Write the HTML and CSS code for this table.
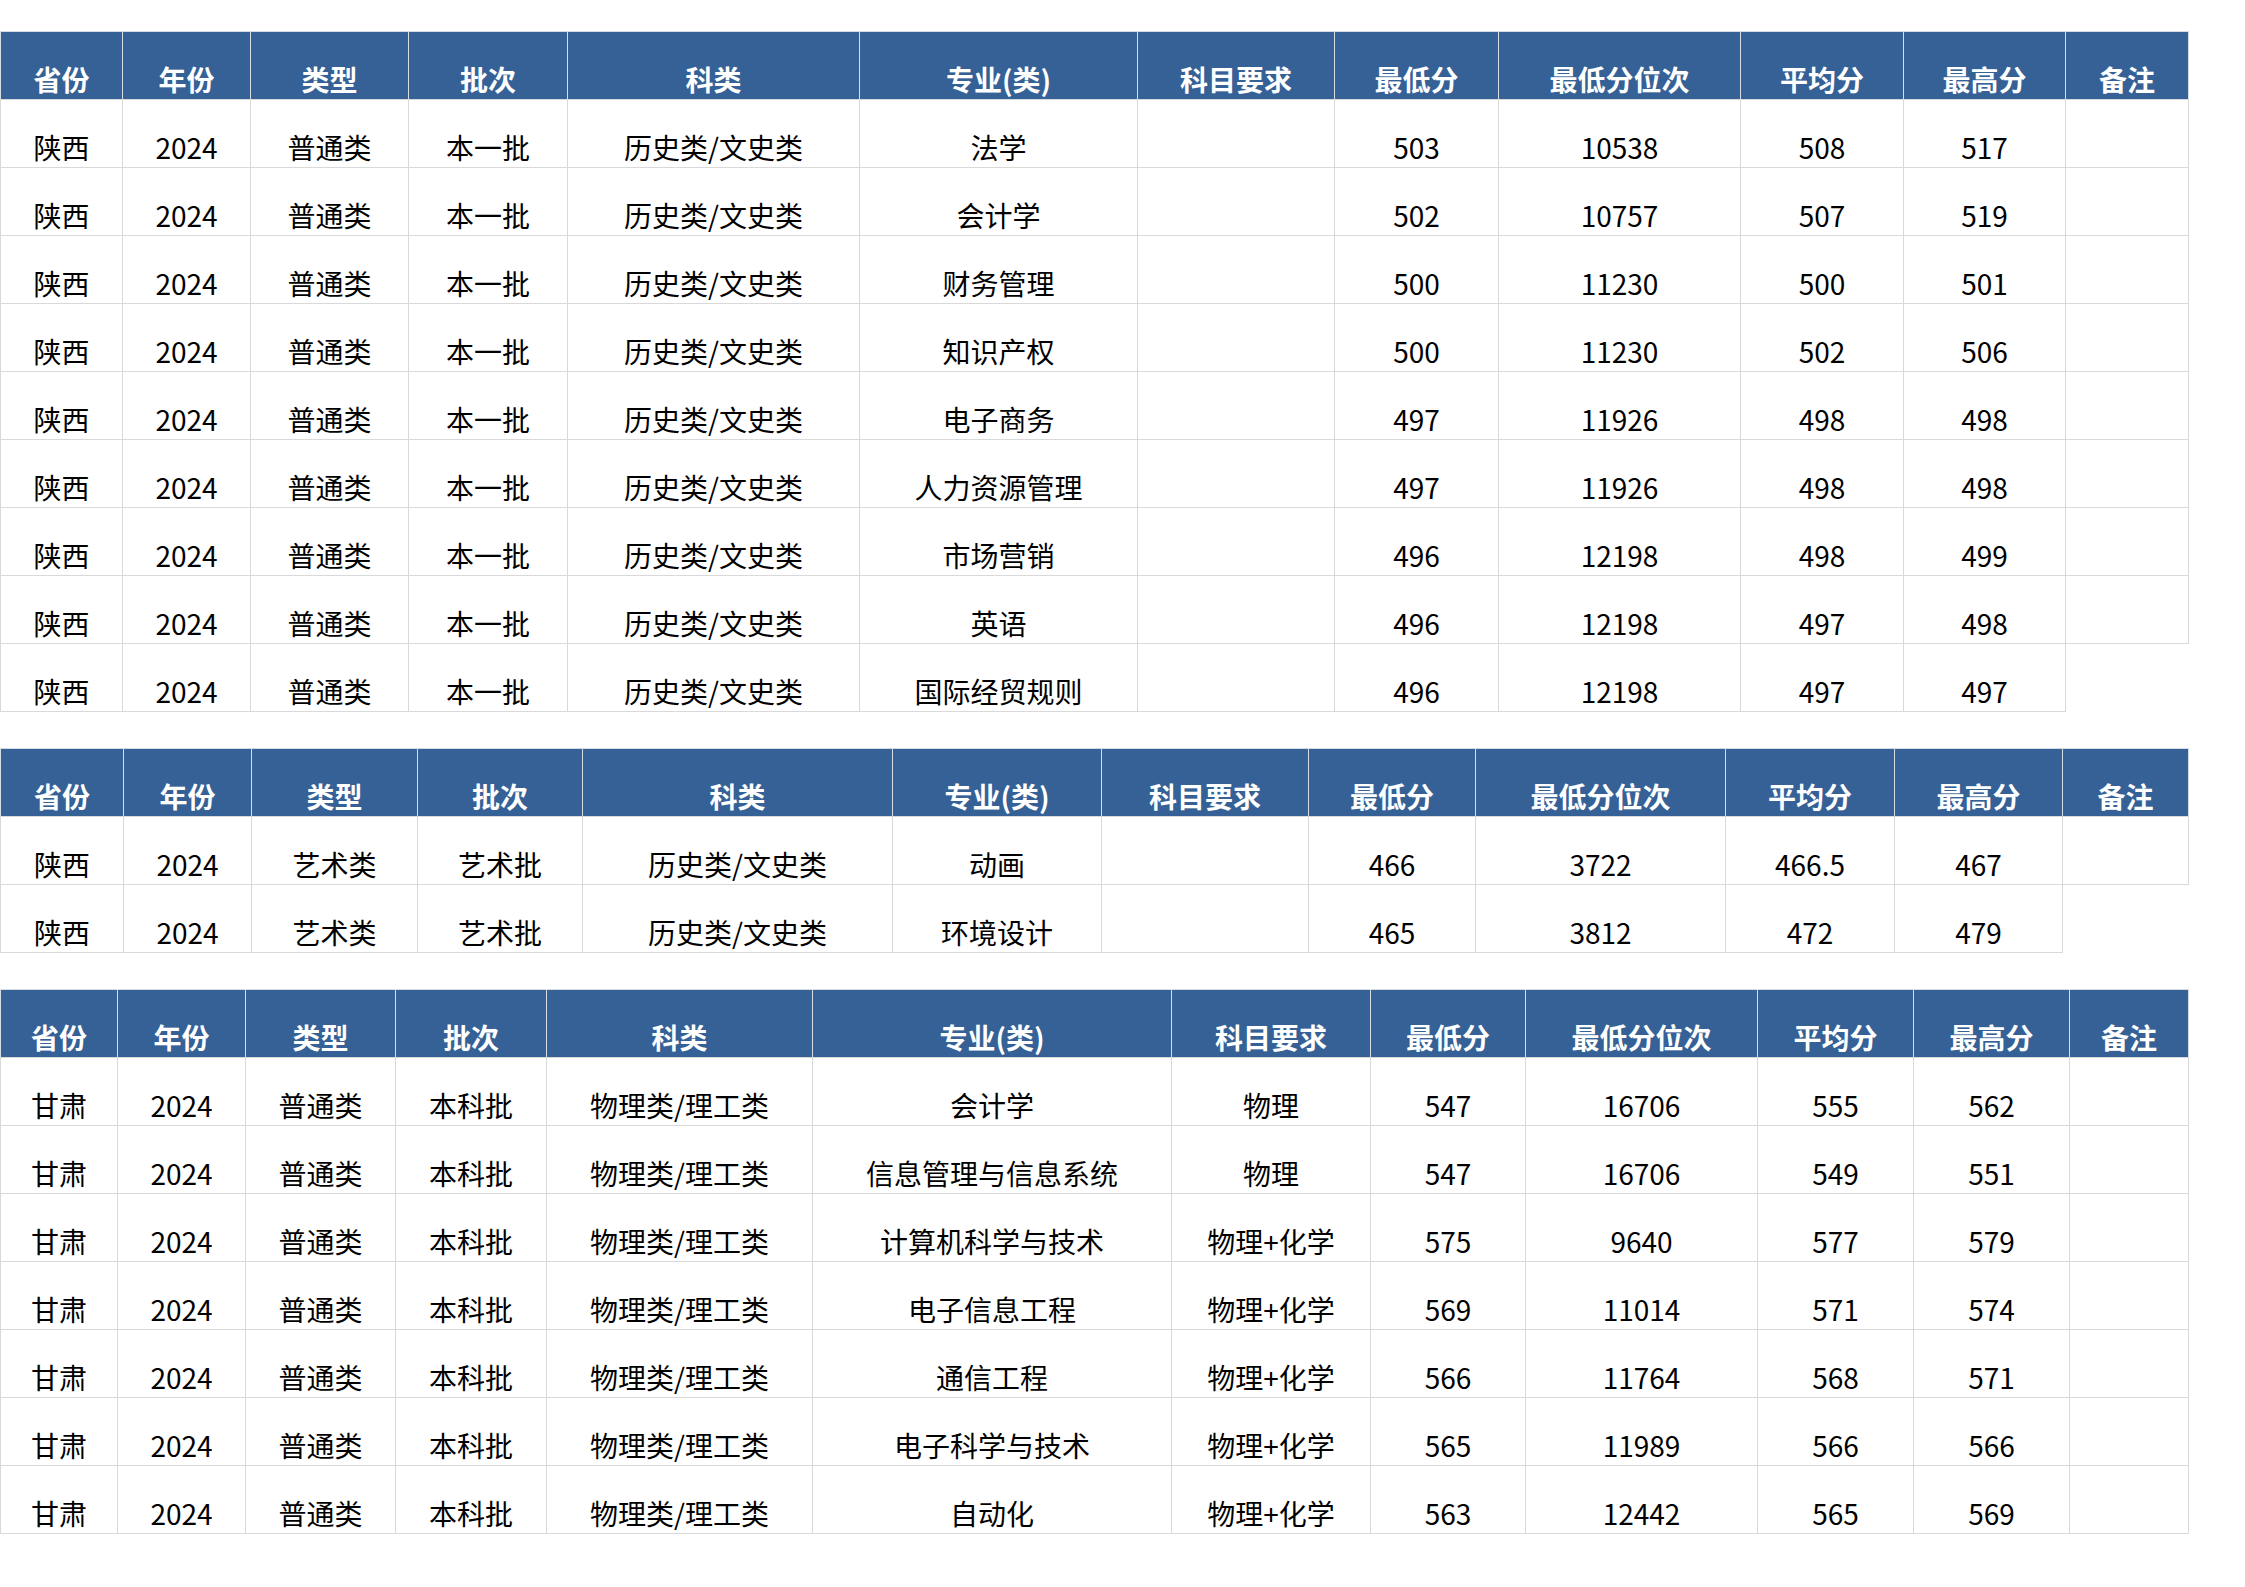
FILE: index.html
```html
<!DOCTYPE html>
<html lang="zh-CN">
<head>
<meta charset="utf-8">
<title>录取分数</title>
<link rel="stylesheet" href="styles.css">
</head>
<body>
<div class="page">
  <table class="grid t1">
    <colgroup><col><col><col><col><col><col><col><col><col><col><col><col></colgroup>
    <thead>
      <tr><th>省份</th><th>年份</th><th>类型</th><th>批次</th><th>科类</th><th>专业(类)</th><th>科目要求</th><th>最低分</th><th>最低分位次</th><th>平均分</th><th>最高分</th><th>备注</th></tr>
    </thead>
    <tbody>
      <tr><td>陕西</td><td>2024</td><td>普通类</td><td>本一批</td><td>历史类/文史类</td><td>法学</td><td></td><td>503</td><td>10538</td><td>508</td><td>517</td><td></td></tr>
      <tr><td>陕西</td><td>2024</td><td>普通类</td><td>本一批</td><td>历史类/文史类</td><td>会计学</td><td></td><td>502</td><td>10757</td><td>507</td><td>519</td><td></td></tr>
      <tr><td>陕西</td><td>2024</td><td>普通类</td><td>本一批</td><td>历史类/文史类</td><td>财务管理</td><td></td><td>500</td><td>11230</td><td>500</td><td>501</td><td></td></tr>
      <tr><td>陕西</td><td>2024</td><td>普通类</td><td>本一批</td><td>历史类/文史类</td><td>知识产权</td><td></td><td>500</td><td>11230</td><td>502</td><td>506</td><td></td></tr>
      <tr><td>陕西</td><td>2024</td><td>普通类</td><td>本一批</td><td>历史类/文史类</td><td>电子商务</td><td></td><td>497</td><td>11926</td><td>498</td><td>498</td><td></td></tr>
      <tr><td>陕西</td><td>2024</td><td>普通类</td><td>本一批</td><td>历史类/文史类</td><td>人力资源管理</td><td></td><td>497</td><td>11926</td><td>498</td><td>498</td><td></td></tr>
      <tr><td>陕西</td><td>2024</td><td>普通类</td><td>本一批</td><td>历史类/文史类</td><td>市场营销</td><td></td><td>496</td><td>12198</td><td>498</td><td>499</td><td></td></tr>
      <tr><td>陕西</td><td>2024</td><td>普通类</td><td>本一批</td><td>历史类/文史类</td><td>英语</td><td></td><td>496</td><td>12198</td><td>497</td><td>498</td><td></td></tr>
      <tr><td>陕西</td><td>2024</td><td>普通类</td><td>本一批</td><td>历史类/文史类</td><td>国际经贸规则</td><td></td><td>496</td><td>12198</td><td>497</td><td>497</td><td class="nb"></td></tr>
    </tbody>
  </table>

  <table class="grid t2">
    <colgroup><col><col><col><col><col><col><col><col><col><col><col><col></colgroup>
    <thead>
      <tr><th>省份</th><th>年份</th><th>类型</th><th>批次</th><th>科类</th><th>专业(类)</th><th>科目要求</th><th>最低分</th><th>最低分位次</th><th>平均分</th><th>最高分</th><th>备注</th></tr>
    </thead>
    <tbody>
      <tr><td>陕西</td><td>2024</td><td>艺术类</td><td>艺术批</td><td>历史类/文史类</td><td>动画</td><td></td><td>466</td><td>3722</td><td>466.5</td><td>467</td><td></td></tr>
      <tr><td>陕西</td><td>2024</td><td>艺术类</td><td>艺术批</td><td>历史类/文史类</td><td>环境设计</td><td></td><td>465</td><td>3812</td><td>472</td><td>479</td><td class="nb"></td></tr>
    </tbody>
  </table>

  <table class="grid t3">
    <colgroup><col><col><col><col><col><col><col><col><col><col><col><col></colgroup>
    <thead>
      <tr><th>省份</th><th>年份</th><th>类型</th><th>批次</th><th>科类</th><th>专业(类)</th><th>科目要求</th><th>最低分</th><th>最低分位次</th><th>平均分</th><th>最高分</th><th>备注</th></tr>
    </thead>
    <tbody>
      <tr><td>甘肃</td><td>2024</td><td>普通类</td><td>本科批</td><td>物理类/理工类</td><td>会计学</td><td>物理</td><td>547</td><td>16706</td><td>555</td><td>562</td><td></td></tr>
      <tr><td>甘肃</td><td>2024</td><td>普通类</td><td>本科批</td><td>物理类/理工类</td><td>信息管理与信息系统</td><td>物理</td><td>547</td><td>16706</td><td>549</td><td>551</td><td></td></tr>
      <tr><td>甘肃</td><td>2024</td><td>普通类</td><td>本科批</td><td>物理类/理工类</td><td>计算机科学与技术</td><td>物理+化学</td><td>575</td><td>9640</td><td>577</td><td>579</td><td></td></tr>
      <tr><td>甘肃</td><td>2024</td><td>普通类</td><td>本科批</td><td>物理类/理工类</td><td>电子信息工程</td><td>物理+化学</td><td>569</td><td>11014</td><td>571</td><td>574</td><td></td></tr>
      <tr><td>甘肃</td><td>2024</td><td>普通类</td><td>本科批</td><td>物理类/理工类</td><td>通信工程</td><td>物理+化学</td><td>566</td><td>11764</td><td>568</td><td>571</td><td></td></tr>
      <tr><td>甘肃</td><td>2024</td><td>普通类</td><td>本科批</td><td>物理类/理工类</td><td>电子科学与技术</td><td>物理+化学</td><td>565</td><td>11989</td><td>566</td><td>566</td><td></td></tr>
      <tr><td>甘肃</td><td>2024</td><td>普通类</td><td>本科批</td><td>物理类/理工类</td><td>自动化</td><td>物理+化学</td><td>563</td><td>12442</td><td>565</td><td>569</td><td></td></tr>
    </tbody>
  </table>
</div>
</body>
</html>
```

FILE: styles.css
```css
html, body {
  margin: 0;
  padding: 0;
  background: #ffffff;
}

body {
  font-family: "Noto Sans CJK SC", "Noto Sans", "Liberation Sans", sans-serif;
  color: #000000;
}

.page {
  display: flex;
  flex-direction: column;
  gap: 36px;
  padding-top: 31px;
}

.grid {
  border-collapse: collapse;
  table-layout: fixed;
  width: 2188px;
}

.grid th,
.grid td {
  height: 68px;
  box-sizing: border-box;
  padding: 0 2px 4px;
  border: 1px solid #d9d9d9;
  text-align: center;
  vertical-align: bottom;
  font-size: 28px;
  line-height: 32px;
  white-space: nowrap;
  overflow: hidden;
}

.grid th {
  background: #356196;
  color: #ffffff;
  font-weight: 700;
  border-color: #d6dce4;
  border-bottom-color: #d9d9d9;
}

.grid td {
  font-weight: 400;
}

.grid td.nb {
  border-right: none;
  border-bottom: none;
}

/* table 1 column widths */
.t1 col:nth-child(1) { width: 122px; }
.t1 col:nth-child(2) { width: 128px; }
.t1 col:nth-child(3) { width: 158px; }
.t1 col:nth-child(4) { width: 159px; }
.t1 col:nth-child(5) { width: 292px; }
.t1 col:nth-child(6) { width: 278px; }
.t1 col:nth-child(7) { width: 197px; }
.t1 col:nth-child(8) { width: 164px; }
.t1 col:nth-child(9) { width: 242px; }
.t1 col:nth-child(10) { width: 163px; }
.t1 col:nth-child(11) { width: 162px; }
.t1 col:nth-child(12) { width: 123px; }

/* table 2 column widths */
.t2 col:nth-child(1) { width: 123px; }
.t2 col:nth-child(2) { width: 128px; }
.t2 col:nth-child(3) { width: 166px; }
.t2 col:nth-child(4) { width: 165px; }
.t2 col:nth-child(5) { width: 310px; }
.t2 col:nth-child(6) { width: 209px; }
.t2 col:nth-child(7) { width: 207px; }
.t2 col:nth-child(8) { width: 167px; }
.t2 col:nth-child(9) { width: 250px; }
.t2 col:nth-child(10) { width: 169px; }
.t2 col:nth-child(11) { width: 168px; }
.t2 col:nth-child(12) { width: 126px; }

/* table 3 column widths */
.t3 col:nth-child(1) { width: 117px; }
.t3 col:nth-child(2) { width: 128px; }
.t3 col:nth-child(3) { width: 150px; }
.t3 col:nth-child(4) { width: 151px; }
.t3 col:nth-child(5) { width: 266px; }
.t3 col:nth-child(6) { width: 359px; }
.t3 col:nth-child(7) { width: 199px; }
.t3 col:nth-child(8) { width: 155px; }
.t3 col:nth-child(9) { width: 232px; }
.t3 col:nth-child(10) { width: 156px; }
.t3 col:nth-child(11) { width: 156px; }
.t3 col:nth-child(12) { width: 119px; }
```
